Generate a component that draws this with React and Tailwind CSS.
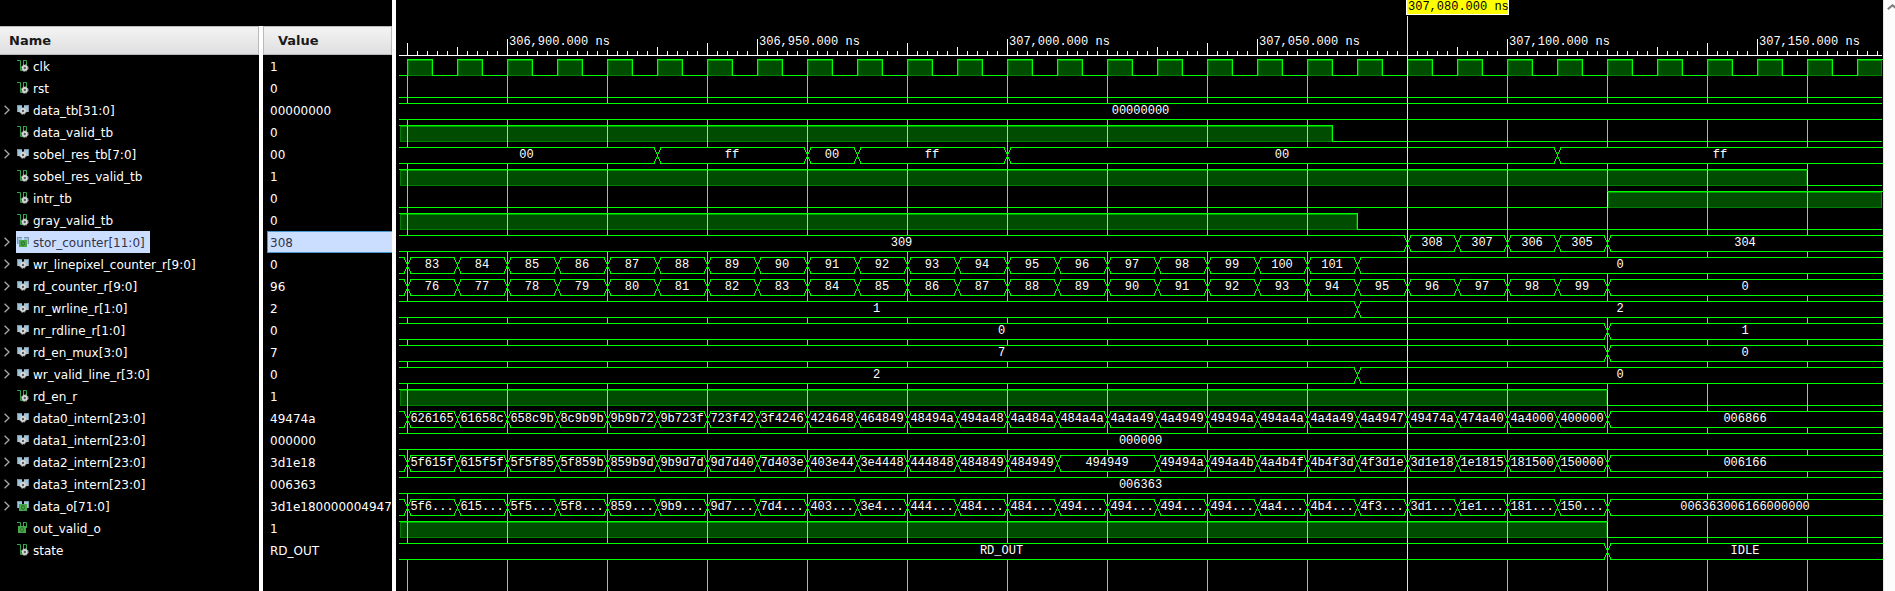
import React from "react";

const PERIOD = 50;
const FIRST_EDGE = 11;
const VIEW_START = 3;
const VIEW_END = 1486;
const VIEW_EDGE = 1487;
const ROW = 22;
const FIRST_TOP = 59;
const HIGH = 16;

const at = (cycle) => FIRST_EDGE + cycle * PERIOD;

const perCycle = (values) => values.map((v, i) => [at(i), v]);
const count = (from, n) => Array.from({ length: n }, (_, i) => String(from + i));
const words = (s) => s.split(" ");

const data0 = words(
  "626165 61658c 658c9b 8c9b9b 9b9b72 9b723f 723f42 3f4246 424648 464849 48494a 494a48 4a484a 484a4a 4a4a49 4a4949 49494a 494a4a 4a4a49 4a4947 49474a 474a40 4a4000 400000 006866"
);
const data2 = words(
  "5f615f 615f5f 5f5f85 5f859b 859b9d 9b9d7d 9d7d40 7d403e 403e44 3e4448 444848 484849 484949 494949 494949 49494a 494a4b 4a4b4f 4b4f3d 4f3d1e 3d1e18 1e1815 181500 150000 006166"
);
const dataO = words(
  "5f6 615 5f5 5f8 859 9b9 9d7 7d4 403 3e4 444 484 484 494 494 494 494 4a4 4b4 4f3 3d1 1e1 181 150"
).map((w) => w + "...");

const clock = Array.from({ length: 30 }, (_, i) => [at(i), Math.min(at(i) + 25, VIEW_END)]);

const signals = [
  { name: "clk", value: "1", icon: "bit", high: clock },
  { name: "rst", value: "0", icon: "bit", high: [] },
  { name: "data_tb[31:0]", value: "00000000", icon: "bus", bus: [[VIEW_START, "00000000"]] },
  { name: "data_valid_tb", value: "0", icon: "bit", high: [[VIEW_START, at(18) + 25]] },
  {
    name: "sobel_res_tb[7:0]", value: "00", icon: "bus",
    bus: [[0, "00"], [at(5), "ff"], [at(8), "00"], [at(9), "ff"], [at(12), "00"], [at(23), "ff"]],
  },
  { name: "sobel_res_valid_tb", value: "1", icon: "bit", high: [[VIEW_START, at(28)]] },
  { name: "intr_tb", value: "0", icon: "bit", high: [[at(24), VIEW_END]] },
  { name: "gray_valid_tb", value: "0", icon: "bit", high: [[VIEW_START, at(19)]] },
  {
    name: "stor_counter[11:0]", value: "308", icon: "busOut", selected: true,
    bus: [[0, "309"], [at(20), "308"], [at(21), "307"], [at(22), "306"], [at(23), "305"], [at(24), "304"]],
  },
  { name: "wr_linepixel_counter_r[9:0]", value: "0", icon: "bus", bus: [[0, ""], ...perCycle([...count(83, 19), "0"])] },
  { name: "rd_counter_r[9:0]", value: "96", icon: "bus", bus: [[0, ""], ...perCycle([...count(76, 24), "0"])] },
  { name: "nr_wrline_r[1:0]", value: "2", icon: "bus", bus: [[0, "1"], [at(19), "2"]] },
  { name: "nr_rdline_r[1:0]", value: "0", icon: "bus", bus: [[0, "0"], [at(24), "1"]] },
  { name: "rd_en_mux[3:0]", value: "7", icon: "bus", bus: [[0, "7"], [at(24), "0"]] },
  { name: "wr_valid_line_r[3:0]", value: "0", icon: "bus", bus: [[0, "2"], [at(19), "0"]] },
  { name: "rd_en_r", value: "1", icon: "bit", high: [[VIEW_START, at(24)]] },
  { name: "data0_intern[23:0]", value: "49474a", icon: "bus", bus: [[0, ""], ...perCycle(data0)] },
  { name: "data1_intern[23:0]", value: "000000", icon: "bus", bus: [[VIEW_START, "000000"]] },
  {
    name: "data2_intern[23:0]", value: "3d1e18", icon: "bus",
    bus: [[0, ""], ...perCycle(data2).filter((_, i) => i !== 14)],
  },
  { name: "data3_intern[23:0]", value: "006363", icon: "bus", bus: [[VIEW_START, "006363"]] },
  {
    name: "data_o[71:0]", value: "3d1e180000004947", icon: "busOut",
    bus: [[0, ""], ...perCycle([...dataO, "006363006166000000"])],
  },
  { name: "out_valid_o", value: "1", icon: "bitOut", high: [[VIEW_START, at(24)]] },
  { name: "state", value: "RD_OUT", icon: "bit", noExpand: true, bus: [[0, "RD_OUT"], [at(24), "IDLE"]] },
];

function Gear({ cx, cy }) {
  return (
    <g>
      <circle cx={cx} cy={cy} r="3" fill="#dcdcdc" />
      <circle cx={cx} cy={cy} r="3.3" fill="none" stroke="#bdbdbd" strokeWidth="1" strokeDasharray="1.6 1" />
      <circle cx={cx} cy={cy} r="1.2" fill="#5a5a5a" />
    </g>
  );
}

function OutBadge({ x, y }) {
  return (
    <g>
      <rect x={x} y={y} width="8" height="7" fill="#4aa64a" />
      <ellipse cx={x + 4} cy={y + 3.5} rx="1.5" ry="2" fill="none" stroke="#2c6e2c" strokeWidth="1" />
    </g>
  );
}

function SignalIcon({ kind }) {
  const isBus = kind.startsWith("bus");
  const isOut = kind.endsWith("Out");
  return (
    <svg className="block h-3 w-3 shrink-0" viewBox="0 0 12 12" aria-hidden="true">
      {isBus ? (
        <g>
          <path d="M0 1H5V4H7V1H12V8H9L8 6H4L3 8H0Z" fill="#9cc6de" />
          <path d="M0 1.5H5M7 1.5H12M.5 1V8M11.5 1V8" fill="none" stroke="#7f95a3" strokeWidth="1" />
        </g>
      ) : (
        <path
          d="M0 .5H3.5V10.5H7.5M6.5 7V.5H9.5V6M6.5 0V10"
          fill="none"
          stroke="#36a54a"
          strokeWidth="1"
        />
      )}
      {isOut ? <OutBadge x={isBus ? 2 : 1} y={4} /> : <Gear cx={isBus ? 6 : 7.8} cy={isBus ? 7 : 8} />}
    </svg>
  );
}

function SignalRow({ signal }) {
  const { name, value, icon, selected, bus, noExpand } = signal;
  return (
    <tr className="h-[22px]">
      <td className="p-0">
        <div className="flex h-[22px] items-center">
          <span className="flex w-4 shrink-0 justify-start pl-1">
            {bus && !noExpand && (
              <button type="button" aria-label={"Expand " + name} className="block">
                <svg className="block h-2.5 w-1.5" viewBox="0 0 6 10" aria-hidden="true">
                  <path d="M.6 .8L5 5L.6 9.2" fill="none" stroke="#a8a8a8" strokeWidth="1.3" />
                </svg>
              </button>
            )}
          </span>
          <span
            className={
              selected
                ? "flex h-full items-center gap-1 bg-[#ccdeff] pr-[5px] pl-px text-[#33334a]"
                : "flex h-full items-center gap-1 pl-px text-white"
            }
          >
            <SignalIcon kind={icon} />
            <span className="pt-px whitespace-nowrap">{name}</span>
          </span>
        </div>
      </td>
      <td className="border-l-4 border-white p-0 pl-1">
        <div
          className={
            selected
              ? "flex h-[22px] items-center overflow-hidden border border-r-0 border-[#4a97cf] bg-[#ccdeff] pt-px pl-[2px] whitespace-nowrap text-[#33334a]"
              : "flex h-[22px] items-center overflow-hidden pt-px pl-[3px] whitespace-nowrap text-white"
          }
        >
          {value}
        </div>
      </td>
    </tr>
  );
}

function SignalTable() {
  const head =
    "h-full border border-[#b9b9b9] bg-linear-to-b from-[#f4f4f4] to-[#dfdfe1] text-left text-[13px] font-bold leading-[27px] text-[#1a1a1a]";
  return (
    <div className="flex w-[392px] shrink-0 flex-col overflow-hidden pt-[26px]">
      <table className="h-full w-full table-fixed border-separate border-spacing-0 text-[12px] leading-[20px]">
        <colgroup>
          <col className="w-[259px]" />
          <col />
        </colgroup>
        <thead>
          <tr className="h-[29px]">
            <th scope="col" className="p-0">
              <div className={head + " border-l-0 pl-[9px]"}>Name</div>
            </th>
            <th scope="col" className="border-l-4 border-white p-0">
              <div className={head + " pl-[14px]"}>Value</div>
            </th>
          </tr>
        </thead>
        <tbody>
          {signals.map((s) => (
            <SignalRow key={s.name} signal={s} />
          ))}
          <tr>
            <td className="p-0"></td>
            <td className="border-l-4 border-white p-0"></td>
          </tr>
        </tbody>
      </table>
    </div>
  );
}

function BitTrace({ y, high }) {
  const low = y + HIGH;
  const edges = high.flatMap(([a, b]) => [
    ...(a > VIEW_START ? [a] : []),
    ...(b < VIEW_END ? [b] : []),
  ]);
  const lows = [];
  let x = VIEW_START;
  for (const [a, b] of high) {
    if (a > x) lows.push([x, a]);
    x = b;
  }
  if (x < VIEW_END) lows.push([x, VIEW_END]);
  return (
    <g>
      {high.map(([a, b]) => (
        <g key={a}>
          <rect x={a + 1} y={y + 1} width={b - a - 1} height={HIGH} fill="#008000" />
          <rect x={a + 1} y={y + 1} width={b - a - 1} height="1" fill="#00a000" />
          <rect x={a + 2} y={y + 2} width={b - a - 3} height={HIGH - 2} fill="#004c00" />
          <rect x={a} y={y} width={b - a + 1} height="1" fill="#00ff00" />
        </g>
      ))}
      {lows.map(([a, b]) => (
        <rect key={a} x={a} y={low} width={b - a} height="1" fill="#00ff00" />
      ))}
      {edges.map((e) => (
        <rect key={e} x={e} y={y} width="1" height={HIGH + 1} fill="#00ff00" />
      ))}
    </g>
  );
}

function BusTrace({ y, bus }) {
  const low = y + HIGH;
  return (
    <g>
      {bus.map(([start, label], i) => {
        const last = i === bus.length - 1;
        const end = last ? (bus.length === 1 ? VIEW_END : VIEW_EDGE) : bus[i + 1][0];
        const a = i === 0 ? VIEW_START : start + 4;
        const b = last ? end : end - 3;
        const shape = [
          i === 0 ? "" : start + 0.5 + "," + (y + 8.5),
          a + "," + y,
          b + "," + y,
          last ? "" : end + 0.5 + "," + (y + 8.5),
          b + "," + (low + 1),
          a + "," + (low + 1),
        ].join(" ");
        return (
          <g key={start}>
            <polygon points={shape} fill="#000000" />
            <rect x={a} y={y} width={b - a} height="1" fill="#00ff00" />
            <rect x={a} y={low} width={b - a} height="1" fill="#00ff00" />
            {label && (
              <text x={(start + end) / 2} y={y + 11} textAnchor="middle" fill="#ffffff">
                {label}
              </text>
            )}
          </g>
        );
      })}
      {bus.slice(1).map(([x]) => (
        <path
          key={x}
          d={`M${x - 3} ${y + 0.5}L${x + 4} ${low + 0.5}M${x + 4} ${y + 0.5}L${x - 3} ${low + 0.5}`}
          stroke="#00ff00"
          strokeWidth="1"
          fill="none"
        />
      ))}
    </g>
  );
}

const TICK_TOPS = [39, 50, 50, 47, 43, 39, 50, 50, 43, 47];

function Ruler() {
  const minor = Array.from({ length: 148 }, (_, i) => FIRST_EDGE + i * 10);
  return (
    <g fill="#ffffff">
      <rect x={VIEW_START} y="55" width={VIEW_END - VIEW_START} height="1" />
      {minor.map((x, i) => {
        const top = i % 5 ? 51 : TICK_TOPS[(i / 5 + 8) % 10];
        return <rect key={x} x={x} y={top} width="1" height={55 - top} />;
      })}
      {["306,900", "306,950", "307,000", "307,050", "307,100", "307,150"].map((t, i) => (
        <text key={t} x={at(2 + i * 5) + 2} y="45">
          {t}.000 ns
        </text>
      ))}
    </g>
  );
}

function Waveform() {
  const grid = Array.from({ length: 15 }, (_, i) => at(i * 2));
  const bits = signals.map((s, i) => [s, FIRST_TOP + i * ROW]).filter(([s]) => s.high);
  const buses = signals.map((s, i) => [s, FIRST_TOP + i * ROW]).filter(([s]) => s.bus);
  return (
    <div className="min-w-0 flex-1 overflow-hidden border-l-4 border-white bg-black">
      <svg
        className="block h-full w-full font-['Liberation_Mono',monospace] text-[12px]"
        shapeRendering="crispEdges"
        role="img"
        aria-label="Signal waveforms"
      >
        <rect x="0" y="0" width="100%" height="100%" fill="#000000" />
        {bits.map(([s, y]) => (
          <BitTrace key={s.name} y={y} high={s.high} />
        ))}
        {grid.map((x) => (
          <rect key={x} x={x} y={FIRST_TOP + HIGH + 1} width="1" height="100%" fill="#ffffff" fillOpacity="0.7" />
        ))}
        {bits.map(([s, y]) => (
          <g key={s.name} fill="#00ff00">
            {s.high.map(([a, b]) => (
              <rect key={a} x={a} y={y} width={b - a + 1} height="1" />
            ))}
          </g>
        ))}
        {buses.map(([s, y]) => (
          <BusTrace key={s.name} y={y} bus={s.bus} />
        ))}
        <Ruler />
        <rect x={at(20)} y="16" width="1" height="100%" fill="#ffff00" />
        <rect x={at(20) - 1} y="0" width="103" height="15" fill="#ffffff" />
        <rect x={at(20)} y="0" width="101" height="14" fill="#ffff00" />
        <text x={at(20) + 1} y="10" fill="#000000">
          307,080.000 ns
        </text>
      </svg>
    </div>
  );
}

export default function App() {
  return (
    <main className="flex h-screen w-full overflow-hidden bg-black font-['DejaVu_Sans','Liberation_Sans',sans-serif]">
      <SignalTable />
      <Waveform />
      <div className="flex w-3 shrink-0 flex-col overflow-hidden border-l border-[#e4e4e4] bg-[#fcfcfc] pt-1 pl-[3px]">
        <button type="button" aria-label="Scroll up" className="block w-3">
          <svg className="block h-1.5 w-3" viewBox="0 0 12 6" aria-hidden="true">
            <path d="M.8 5.2L5.5 1.2L10.2 5.2" fill="none" stroke="#7d7d7d" strokeWidth="2" />
          </svg>
        </button>
      </div>
    </main>
  );
}
